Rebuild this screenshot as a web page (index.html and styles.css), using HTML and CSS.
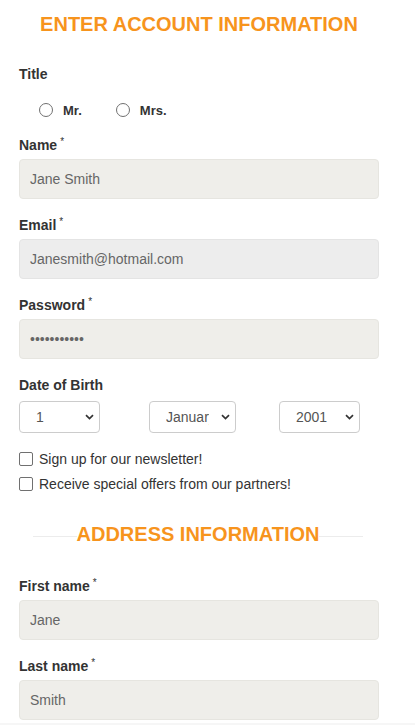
FILE: index.html
```html
<!DOCTYPE html>
<html>
<head>
<meta charset="utf-8">
<link rel="stylesheet" href="styles.css">
</head>
<body>
<form class="form">
  <h1 class="heading">ENTER ACCOUNT INFORMATION</h1>

  <div class="label label-title">Title</div>
  <div class="radio-row">
    <label class="radio"><input type="radio" name="title"><span>Mr.</span></label>
    <label class="radio"><input type="radio" name="title"><span>Mrs.</span></label>
  </div>

  <div class="field field-first">
    <div class="label">Name<span class="req">*</span></div>
    <input class="text" type="text" value="Jane Smith">
  </div>
  <div class="field">
    <div class="label">Email<span class="req">*</span></div>
    <input class="text text-email" type="text" value="Janesmith@hotmail.com">
  </div>
  <div class="field">
    <div class="label">Password<span class="req">*</span></div>
    <input class="text" type="password" value="12345678901">
  </div>

  <div class="field">
    <div class="label label-dob">Date of Birth</div>
    <div class="dob">
      <div class="sel sel-day">
        <select><option>1</option></select>
        <svg class="chev" width="9" height="6" viewBox="0 0 9 6"><path d="M1 1.2 L4.5 4.6 L8 1.2" fill="none" stroke="#333" stroke-width="1.7"/></svg>
      </div>
      <div class="sel sel-month">
        <select><option>January</option></select>
        <svg class="chev" width="9" height="6" viewBox="0 0 9 6"><path d="M1 1.2 L4.5 4.6 L8 1.2" fill="none" stroke="#333" stroke-width="1.7"/></svg>
      </div>
      <div class="sel sel-year">
        <select><option>2001</option></select>
        <svg class="chev" width="9" height="6" viewBox="0 0 9 6"><path d="M1 1.2 L4.5 4.6 L8 1.2" fill="none" stroke="#333" stroke-width="1.7"/></svg>
      </div>
    </div>
  </div>

  <div class="checks">
    <label class="check"><input type="checkbox"><span>Sign up for our newsletter!</span></label>
    <label class="check"><input type="checkbox"><span>Receive special offers from our partners!</span></label>
  </div>

  <h2 class="divider"><span>ADDRESS INFORMATION</span></h2>

  <div class="field field-addr">
    <div class="label">First name<span class="req">*</span></div>
    <input class="text" type="text" value="Jane">
  </div>
  <div class="field">
    <div class="label">Last name<span class="req">*</span></div>
    <input class="text" type="text" value="Smith">
  </div>
</form>
<div class="footer"></div>
</body>
</html>
```

FILE: styles.css
```css
html, body {
  margin: 0;
  padding: 0;
  background: #ffffff;
  font-family: "Liberation Sans", Arial, sans-serif;
  color: #333333;
}

.form {
  width: 360px;
  padding: 0 36px 0 19px;
  margin: 0;
}

.heading {
  margin: 12px 0 0 0;
  font-size: 20px;
  line-height: 24px;
  font-weight: bold;
  color: #f7941d;
  text-align: center;
}

.label {
  height: 17px;
  font-size: 14px;
  line-height: 17px;
  font-weight: bold;
  color: #333333;
  margin-bottom: 5px;
}

.label-title {
  margin-top: 30px;
  margin-bottom: 0;
}

.req {
  font-size: 10px;
  line-height: 0;
  font-weight: normal;
  margin-left: 3px;
  vertical-align: 5px;
}

.radio-row {
  display: flex;
  align-items: center;
  height: 20px;
  margin-top: 17px;
  padding-left: 20px;
}

.radio {
  display: flex;
  align-items: center;
  font-size: 13px;
  font-weight: bold;
  color: #333;
  margin-right: 34px;
}

.radio input {
  appearance: none;
  -webkit-appearance: none;
  width: 14px;
  height: 14px;
  margin: 0 10px 0 0;
  border: 1px solid #707070;
  border-radius: 50%;
  background: #fff;
}

.field {
  margin-top: 18px;
}

.field-first {
  margin-top: 17px;
}

.text {
  display: block;
  box-sizing: border-box;
  width: 360px;
  height: 40px;
  margin: 0;
  padding: 0 10px;
  border: 1px solid #e6e5e0;
  border-radius: 4px;
  background: #efeeea;
  font-family: "Liberation Sans", Arial, sans-serif;
  font-size: 14px;
  color: #666666;
  outline: none;
}

.text-email {
  background: #ededed;
  border-color: #e4e4e4;
}

.label-dob {
  margin-bottom: 7px;
}

.dob {
  display: flex;
}

.sel {
  position: relative;
  height: 32px;
}

.sel-day { width: 81px; margin-right: 49px; }
.sel-month { width: 87px; margin-right: 43px; }
.sel-year { width: 81px; }

.sel select {
  appearance: none;
  -webkit-appearance: none;
  box-sizing: border-box;
  width: 100%;
  height: 32px;
  margin: 0;
  padding: 0 26px 0 16px;
  border: 1px solid #cccccc;
  border-radius: 4px;
  background: #ffffff;
  font-family: "Liberation Sans", Arial, sans-serif;
  font-size: 14px;
  color: #555555;
  outline: none;
}

.chev {
  position: absolute;
  right: 6px;
  top: 13px;
  pointer-events: none;
}

.checks {
  margin-top: 16px;
  display: flex;
  flex-direction: column;
  gap: 5px;
}

.check {
  display: flex;
  align-items: center;
  height: 20px;
  font-size: 14px;
  color: #333333;
}

.check input {
  appearance: none;
  -webkit-appearance: none;
  width: 14px;
  height: 14px;
  margin: 0 6px 0 0;
  border: 1px solid #707070;
  border-radius: 2px;
  background: #fff;
}

.divider {
  display: flex;
  align-items: center;
  margin: 28px 16px 0 14px;
  font-size: 20px;
  line-height: 24px;
  font-weight: bold;
  color: #f7941d;
}

.divider::before,
.divider::after {
  content: "";
  flex: 1;
  height: 1px;
  background: #ececec;
  margin-top: 5px;
}

.field-addr {
  margin-top: 32px;
}

.footer {
  margin-top: 3px;
  height: 30px;
  background: #f6f6f6;
}
```
